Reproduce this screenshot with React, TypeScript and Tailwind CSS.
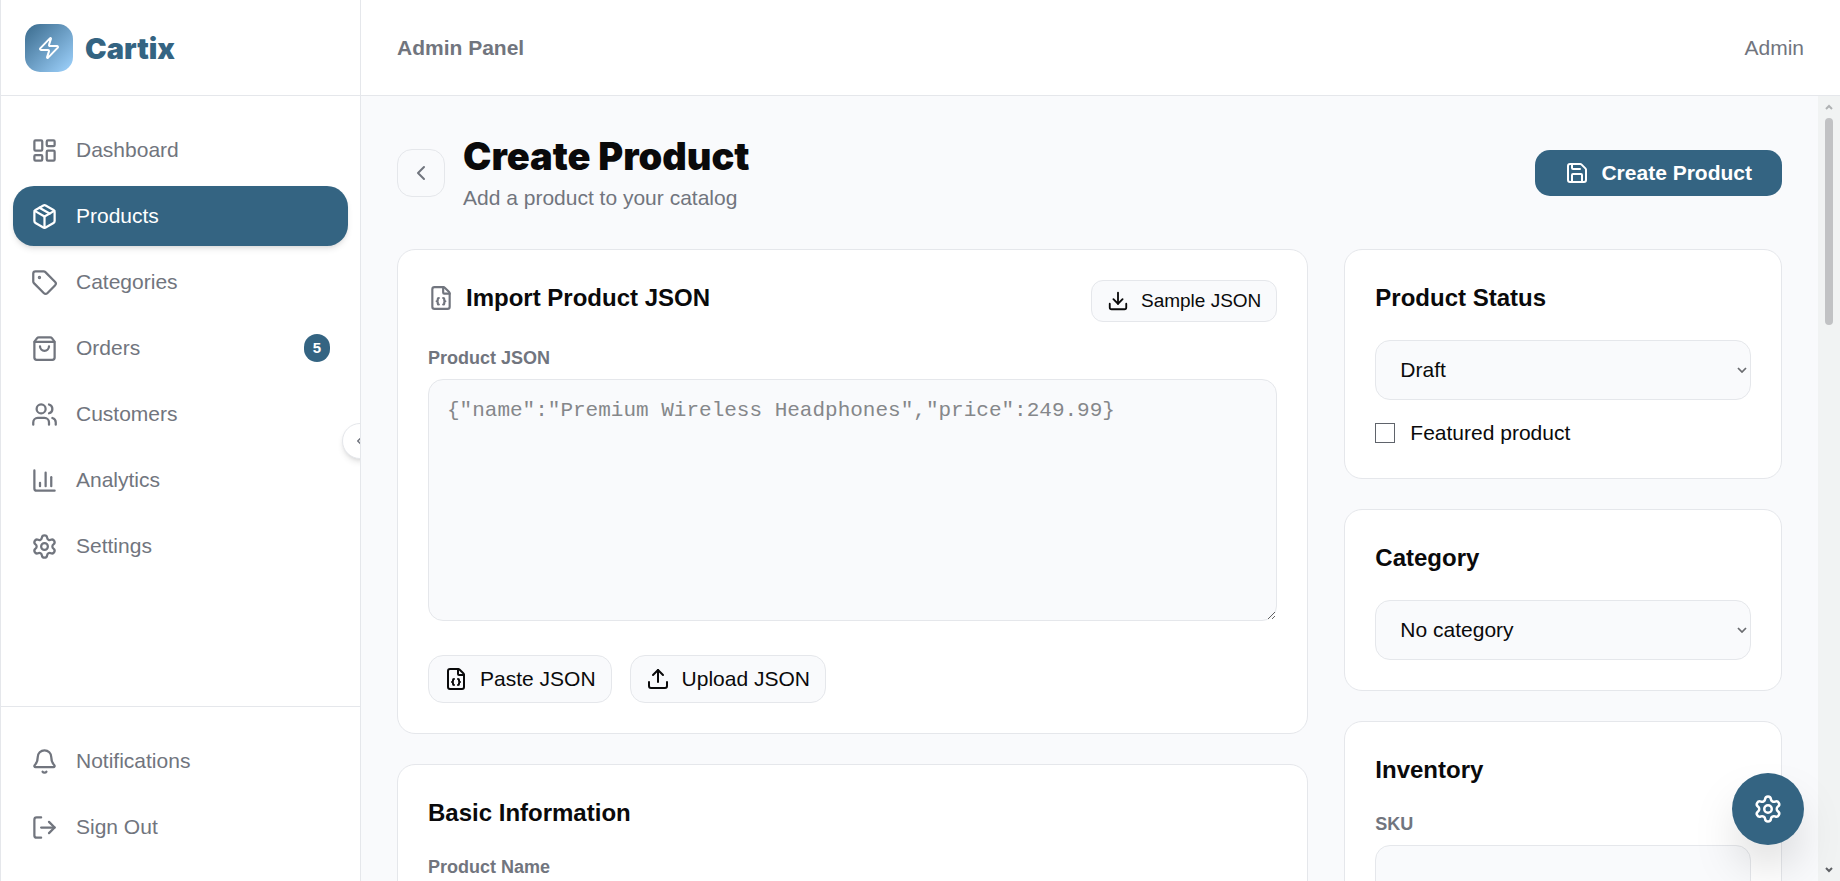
import React from 'react';
import {
  Bell,
  ChartColumn,
  ChevronLeft,
  Download,
  FileJson,
  LayoutDashboard,
  LogOut,
  Package,
  Save,
  Settings,
  ShoppingBag,
  Tag,
  Upload,
  Users,
  Zap,
} from 'lucide-react';
import type { LucideIcon } from 'lucide-react';

type NavItem = { label: string; icon: LucideIcon; active?: boolean; badge?: number };

const mainNav: NavItem[] = [
  { label: 'Dashboard', icon: LayoutDashboard },
  { label: 'Products', icon: Package, active: true },
  { label: 'Categories', icon: Tag },
  { label: 'Orders', icon: ShoppingBag, badge: 5 },
  { label: 'Customers', icon: Users },
  { label: 'Analytics', icon: ChartColumn },
  { label: 'Settings', icon: Settings },
];

export default function App() {
  return (
    <div className="flex h-screen overflow-hidden border-l border-[#e5e7eb] bg-[#f9fafc] font-['Liberation_Sans',Arial,sans-serif] text-[21px] leading-[30px] text-[#0a0a0b]">
      <Sidebar />
      <div className="flex min-w-0 flex-1 flex-col">
        <header className="flex h-24 shrink-0 items-center justify-between border-b border-[#e5e7eb] bg-white px-9 text-[#71757e]">
          <span className="font-bold">Admin Panel</span>
          <span>Admin</span>
        </header>
        <div className="flex min-h-0 flex-1">
          <main className="min-w-0 flex-1 overflow-y-auto p-9 [scrollbar-width:none]">
            <PageHeader />
            <div className="grid grid-cols-3 items-start gap-9">
              <div className="col-span-2 flex flex-col gap-[30px]">
                <ImportCard />
                <Card title="Basic Information">
                  <Field id="name" label="Product Name" />
                </Card>
              </div>
              <div className="flex flex-col gap-[30px]">
                <Card title="Product Status">
                  <Select label="Product Status" options={['Draft', 'Active', 'Archived']} />
                  <label className="mt-[18px] flex items-center gap-[15px]">
                    <input type="checkbox" className="size-5 appearance-none border border-[#5f636b] bg-white checked:bg-[#346482]" />
                    Featured product
                  </label>
                </Card>
                <Card title="Category">
                  <Select label="Category" options={['No category']} />
                </Card>
                <Card title="Inventory">
                  <Field id="sku" label="SKU" />
                </Card>
              </div>
            </div>
          </main>
          <Scrollbar />
        </div>
      </div>
      <button aria-label="Quick settings" className="fixed right-9 bottom-9 flex size-[72px] items-center justify-center rounded-full bg-[#346482] text-white shadow-2xl">
        <Settings size={30} />
      </button>
    </div>
  );
}

function Sidebar() {
  return (
    <aside className="relative flex w-[360px] shrink-0 flex-col overflow-hidden border-r border-[#e5e7eb] bg-white">
      <div className="flex h-24 shrink-0 items-center gap-3 border-b border-[#e5e7eb] px-6">
        <div className="flex size-12 items-center justify-center rounded-[15px] bg-linear-to-br from-[#3a6b8d] to-[#a0d4ff] text-white">
          <Zap size={24} />
        </div>
        <span className="pt-0.5 font-['Inter',sans-serif] text-[29px] font-black text-[#346482]">Cartix</span>
      </div>

      <nav className="flex flex-1 flex-col gap-1.5 px-3 py-6">
        {mainNav.map((item) => (
          <NavLink key={item.label} {...item} />
        ))}
      </nav>

      <div className="flex flex-col gap-1.5 border-t border-[#e5e7eb] px-3 py-6">
        <NavLink label="Notifications" icon={Bell} />
        <NavLink label="Sign Out" icon={LogOut} />
      </div>

      {/* Collapse toggle, cut by the sidebar edge */}
      <button aria-label="Collapse sidebar" className="absolute top-1/2 -right-[18px] flex size-9 -translate-y-1/2 items-center justify-center rounded-full border border-[#e5e7eb] bg-white text-[#71757e] shadow-md">
        <ChevronLeft size={18} />
      </button>
    </aside>
  );
}

function NavLink({ label, icon: Icon, active, badge }: NavItem) {
  return (
    <a
      href="#"
      className={`flex h-[60px] items-center gap-[18px] rounded-[21px] px-[18px] ${
        active ? 'bg-[#346482] text-white shadow-md' : 'text-[#71757e]'
      }`}
    >
      <Icon size={27} strokeWidth={2} />
      <span className="flex-1">{label}</span>
      {badge && (
        <span className="flex h-7 w-[26px] items-center justify-center rounded-full bg-[#346482] text-[15px] font-bold text-white">{badge}</span>
      )}
    </a>
  );
}

function PageHeader() {
  return (
    <div className="mb-9 flex items-center justify-between">
      <div className="flex items-center gap-[18px]">
        <button aria-label="Back" className="flex size-12 items-center justify-center rounded-[15px] border border-[#e5e7eb] text-[#71757e]">
          <ChevronLeft size={24} />
        </button>
        <div>
          <h1 className="font-['Inter',sans-serif] text-[38px] leading-[48px] font-black">Create Product</h1>
          <p className="mt-[3px] text-[#71757e]">Add a product to your catalog</p>
        </div>
      </div>
      <button className="flex h-[46px] items-center gap-3 rounded-[15px] bg-[#346482] px-[30px] font-bold text-white">
        <Save size={24} />
        Create Product
      </button>
    </div>
  );
}

function ImportCard() {
  return (
    <section className="rounded-[18px] border border-[#e5e7eb] bg-white p-[30px]">
      <div className="mb-6 flex items-start justify-between">
        <h2 className="flex items-center gap-3 text-2xl leading-9 font-bold">
          <FileJson size={26} className="text-[#71757e]" />
          Import Product JSON
        </h2>
        <button className="flex h-[42px] items-center gap-3 rounded-xl border border-[#e5e7eb] bg-[#f9fafc] px-[15px] text-[19px]">
          <Download size={22} />
          Sample JSON
        </button>
      </div>
      <label htmlFor="json" className="mb-[9px] block text-lg leading-6 font-bold text-[#71757e]">
        Product JSON
      </label>
      <textarea
        id="json"
        placeholder={'{"name":"Premium Wireless Headphones","price":249.99}'}
        className="block h-[242px] w-full rounded-[15px] border border-[#e5e7eb] bg-[#f9fafc] px-[18px] py-4 font-['Liberation_Mono',monospace] placeholder:text-[#85878a]"
      />
      <div className="mt-[34px] flex gap-[18px]">
        <button className="flex h-12 items-center gap-3 rounded-[15px] border border-[#e5e7eb] bg-[#f9fafc] px-[15px]">
          <FileJson size={24} />
          Paste JSON
        </button>
        <button className="flex h-12 items-center gap-3 rounded-[15px] border border-[#e5e7eb] bg-[#f9fafc] px-[15px]">
          <Upload size={24} />
          Upload JSON
        </button>
      </div>
    </section>
  );
}

function Card({ title, children }: { title: string; children: React.ReactNode }) {
  return (
    <section className="rounded-[18px] border border-[#e5e7eb] bg-white p-[30px]">
      <h2 className="mb-6 text-2xl leading-9 font-bold">{title}</h2>
      {children}
    </section>
  );
}

function Field({ id, label }: { id: string; label: string }) {
  return (
    <>
      <label htmlFor={id} className="mb-[9px] block text-lg leading-6 font-bold text-[#71757e]">
        {label}
      </label>
      <input id={id} type="text" className="block h-[60px] w-full rounded-[15px] border border-[#e5e7eb] bg-[#f9fafc] px-[18px]" />
    </>
  );
}

function Select({ label, options }: { label: string; options: string[] }) {
  return (
    <div className="relative">
      <select aria-label={label} className="block h-[60px] w-full appearance-none rounded-[15px] border border-[#e5e7eb] bg-[#f9fafc] px-6">
        {options.map((option) => (
          <option key={option}>{option}</option>
        ))}
      </select>
      <svg className="pointer-events-none absolute inset-y-0 right-1 my-auto" width="10" height="6" viewBox="0 0 10 6" fill="none" stroke="#6a6c70" strokeWidth="1.75">
        <path d="M1 1l4 4 4-4" />
      </svg>
    </div>
  );
}

function Scrollbar() {
  return (
    <div className="flex w-[22px] shrink-0 flex-col items-center justify-between bg-[#f1f3f3] py-2">
      <div className="flex min-h-0 flex-1 flex-col items-center gap-2">
        <svg width="8" height="6" viewBox="0 0 8 6" fill="none" stroke="#b0b2b4" strokeWidth="2">
          <path d="M1 5l3-3 3 3" />
        </svg>
        <div className="h-[207px] w-2 rounded-full bg-[#c1c2c4]" />
      </div>
      <svg width="8" height="6" viewBox="0 0 8 6" fill="none" stroke="#606266" strokeWidth="2">
        <path d="M1 1l3 3 3-3" />
      </svg>
    </div>
  );
}
